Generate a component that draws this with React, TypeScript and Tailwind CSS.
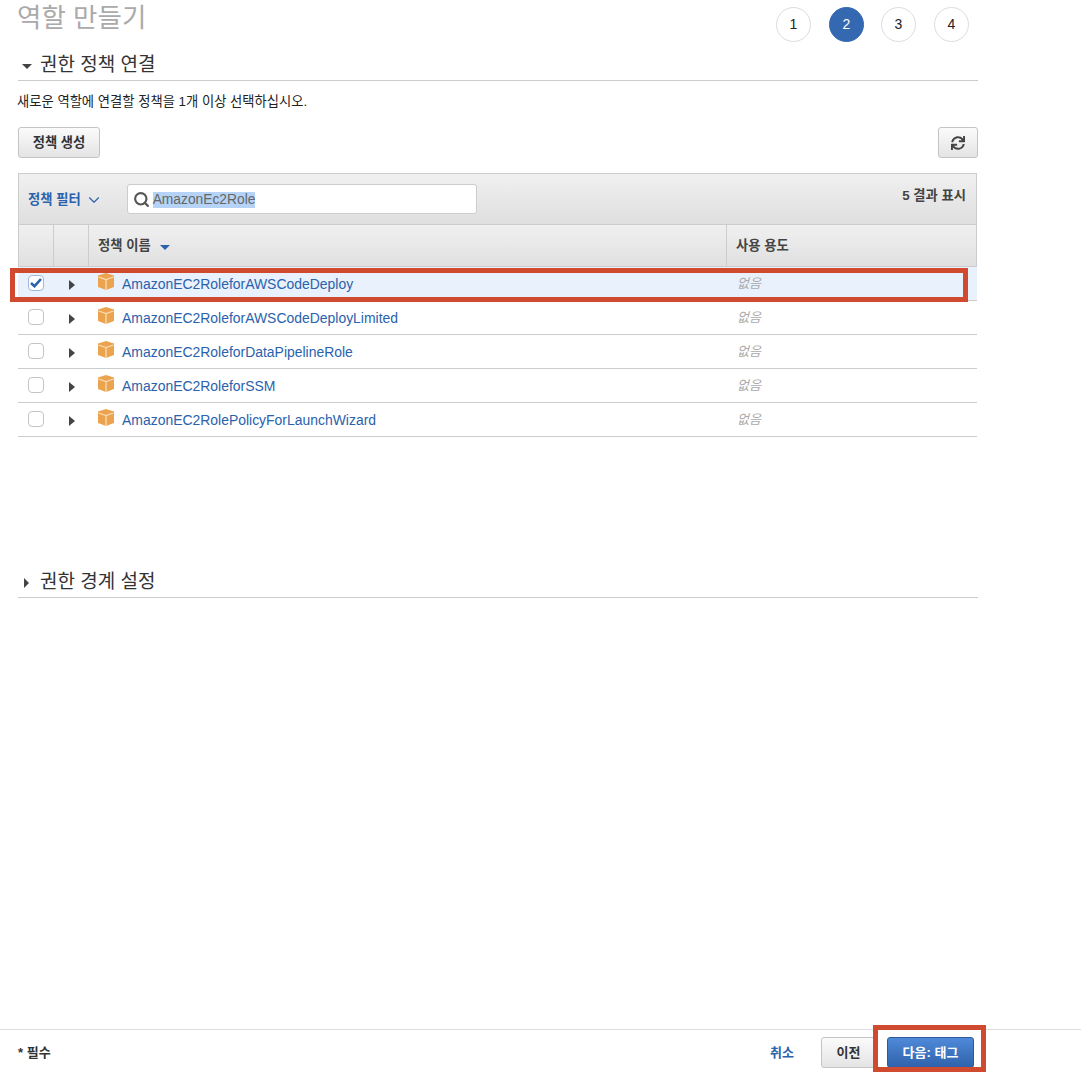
import { ChevronDown, Search } from "lucide-react";
import { FaSync } from "react-icons/fa";

const policies = [
  "AmazonEC2RoleforAWSCodeDeploy",
  "AmazonEC2RoleforAWSCodeDeployLimited",
  "AmazonEC2RoleforDataPipelineRole",
  "AmazonEC2RoleforSSM",
  "AmazonEC2RolePolicyForLaunchWizard",
];

function Cube() {
  return (
    <svg width="16" height="17" viewBox="0 0 16 17" className="mb-[3px] shrink-0">
      <path d="M8 0 L16 2.6 V14 L8 17 L0 14 V2.6 Z" fill="#eca34e" />
      <path d="M0.5 4 L8 6.6 L15.5 4 M8 6.6 V17" fill="none" stroke="#f9dcb5" strokeWidth="1.3" />
    </svg>
  );
}

function Step({ n, active, className = "" }: { n: number; active?: boolean; className?: string }) {
  return (
    <div
      className={`flex h-[35px] w-[35px] items-center justify-center rounded-full border text-[14px] ${className} ${
        active ? "border-[#3468b0] bg-[#3468b0] text-white" : "border-[#dddddd] bg-white text-[#222222]"
      }`}
    >
      {n}
    </div>
  );
}

function SectionHeader({ title, open }: { title: string; open?: boolean }) {
  return (
    <div className="flex h-[34px] items-center border-b border-[#cccccc] pl-[4px]">
      <div className="flex w-[18px] justify-start">
        {open ? (
          <div className="mt-[5px] h-0 w-0 border-x-[5px] border-t-[5px] border-x-transparent border-t-[#444444]" />
        ) : (
          <div className="mt-[4px] ml-[2px] h-0 w-0 border-y-[5px] border-l-[5px] border-y-transparent border-l-[#444444]" />
        )}
      </div>
      <h2 className="pt-[2px] text-[19px] leading-[28px] text-[#333333]">{title}</h2>
    </div>
  );
}

export default function App() {
  return (
    <div className="relative flex h-[1072px] flex-col overflow-hidden bg-white [font-family:'Liberation_Sans','Noto_Sans_CJK_KR',sans-serif]">
      <div className="w-[978px] pl-[18px]">
        <div className="flex h-[47px] items-start justify-between">
          <h1 className="mt-[-3px] -ml-[1px] pt-[1px] text-[26.5px] leading-[40px] text-[#aaaaaa]">역할 만들기</h1>
          <div className="mt-[7px] mr-[9px] flex gap-[17px]">
            <Step n={1} />
            <Step n={2} active className="ml-[1px]" />
            <Step n={3} />
            <Step n={4} className="ml-[1px]" />
          </div>
        </div>

        <SectionHeader title="권한 정책 연결" open />

        <p className="mt-[12px] -ml-[1px] text-[13.3px] leading-[18px] text-[#222222]">새로운 역할에 연결할 정책을 1개 이상 선택하십시오.</p>

        <div className="mt-[16px] flex justify-between">
          <button className="h-[31px] w-[82px] rounded-[3px] border border-[#c4c4c4] bg-gradient-to-b from-[#fbfbfb] to-[#e4e4e4] pt-[1px] text-[13.3px] font-bold text-[#333333]">
            정책 생성
          </button>
          <button className="flex h-[31px] w-[40px] items-center justify-center rounded-[3px] border border-[#c4c4c4] bg-gradient-to-b from-[#fbfbfb] to-[#e4e4e4] text-[#444444]">
            <FaSync className="h-[14px] w-[14px]" />
          </button>
        </div>

        <div className="mt-[15px] w-[959px]">
          <div className="flex h-[52px] items-start justify-between border border-[#cccccc] bg-gradient-to-b from-[#f0f0f0] to-[#dfdfdf]">
            <div className="flex items-center pt-[10px]">
              <span className="mt-[2px] ml-[9px] text-[13.3px] font-semibold text-[#2a62ad]">정책 필터</span>
              <ChevronDown className="mt-[2px] ml-[4px] h-[18px] w-[18px] text-[#2a62ad]" strokeWidth={1.5} />
              <div className="ml-[24px] flex h-[30px] w-[350px] items-center rounded-[3px] border border-[#cccccc] bg-white pl-[5px]">
                <Search className="mt-[1px] h-[17px] w-[17px] text-[#555555]" strokeWidth={3} />
                <span className="mt-[2px] ml-[3px] bg-[#b4d3f6] text-[13.8px] leading-[16px] text-[#666666]">AmazonEc2Role</span>
              </div>
            </div>
            <span className="mt-[12px] mr-[10px] text-[13.3px] font-bold text-[#444444]">5 결과 표시</span>
          </div>

          <div className="flex h-[42px] items-center border-x border-b border-[#cccccc] bg-gradient-to-b from-[#f0f0f0] to-[#e0e0e0] text-[13.3px] font-bold text-[#444444]">
            <div className="h-full w-[35px] border-r border-[#cccccc]" />
            <div className="h-full w-[35px] border-r border-[#cccccc]" />
            <div className="flex h-full w-[638px] items-center border-r border-[#cccccc] pt-[1px] pl-[9px]">
              정책 이름
              <div className="mt-[2px] ml-[9px] h-0 w-0 border-x-[5px] border-t-[5px] border-x-transparent border-t-[#2a62ad]" />
            </div>
            <div className="pt-[1px] pl-[9px]">사용 용도</div>
          </div>

          {policies.map((name, i) => (
            <div
              key={name}
              className={`flex h-[34px] items-center border-b border-[#cccccc] ${i === 0 ? "bg-[#e9f1fc]" : "bg-white"}`}
            >
              <div className="flex w-[35px] justify-center pl-[1px]">
                <div
                  className={`mb-[1px] flex h-[16px] w-[16px] items-center justify-center rounded-[4px] border bg-white ${
                    i === 0 ? "border-[#9db8dc]" : "border-[#c4c4c4]"
                  }`}
                >
                  {i === 0 && (
                    <svg width="12" height="10" viewBox="0 0 12 10">
                      <path d="M1 5 L4.5 8.2 L11 1" fill="none" stroke="#2a62ad" strokeWidth="2.6" />
                    </svg>
                  )}
                </div>
              </div>
              <div className="flex w-[35px] justify-center pl-[2px]">
                <div className="mt-[3px] h-0 w-0 border-y-[5px] border-l-[6px] border-y-transparent border-l-[#444444]" />
              </div>
              <div className="flex w-[638px] items-center pl-[10px]">
                <Cube />
                <span className="mt-[2px] ml-[8px] text-[13.95px] text-[#2a62ad]">{name}</span>
              </div>
              <div className="mt-[1px] pl-[11px] text-[13px] text-[#aaaaaa] italic">없음</div>
            </div>
          ))}
        </div>

        <div className="mt-[127px]">
          <SectionHeader title="권한 경계 설정" />
        </div>
      </div>

      <div className="mt-auto h-[43px] border-t border-[#dddddd] pt-[7px] pr-[107px] pl-[18px] text-[13px] font-bold">
        <div className="flex h-[31px] items-center">
          <span className="text-[#333333]">* 필수</span>
          <span className="mr-[27px] ml-auto text-[#2a62ad]">취소</span>
          <button className="h-[31px] w-[55px] rounded-l-[3px] border border-[#c4c4c4] bg-gradient-to-b from-[#fbfbfb] to-[#e4e4e4] text-[#333333]">
            이전
          </button>
          <button className="ml-[11px] h-[31px] w-[87px] rounded-[3px] border border-[#2a5a9e] bg-gradient-to-b from-[#4f8ad8] to-[#2f62ac] text-white">
            다음: 태그
          </button>
        </div>
      </div>

      <div className="absolute top-[268px] left-[10px] h-[34px] w-[958px] border-[5px] border-[#d04a30]" />
      <div className="absolute top-[1025px] left-[873px] h-[47px] w-[113px] border-[5px] border-[#d04a30]" />
    </div>
  );
}
